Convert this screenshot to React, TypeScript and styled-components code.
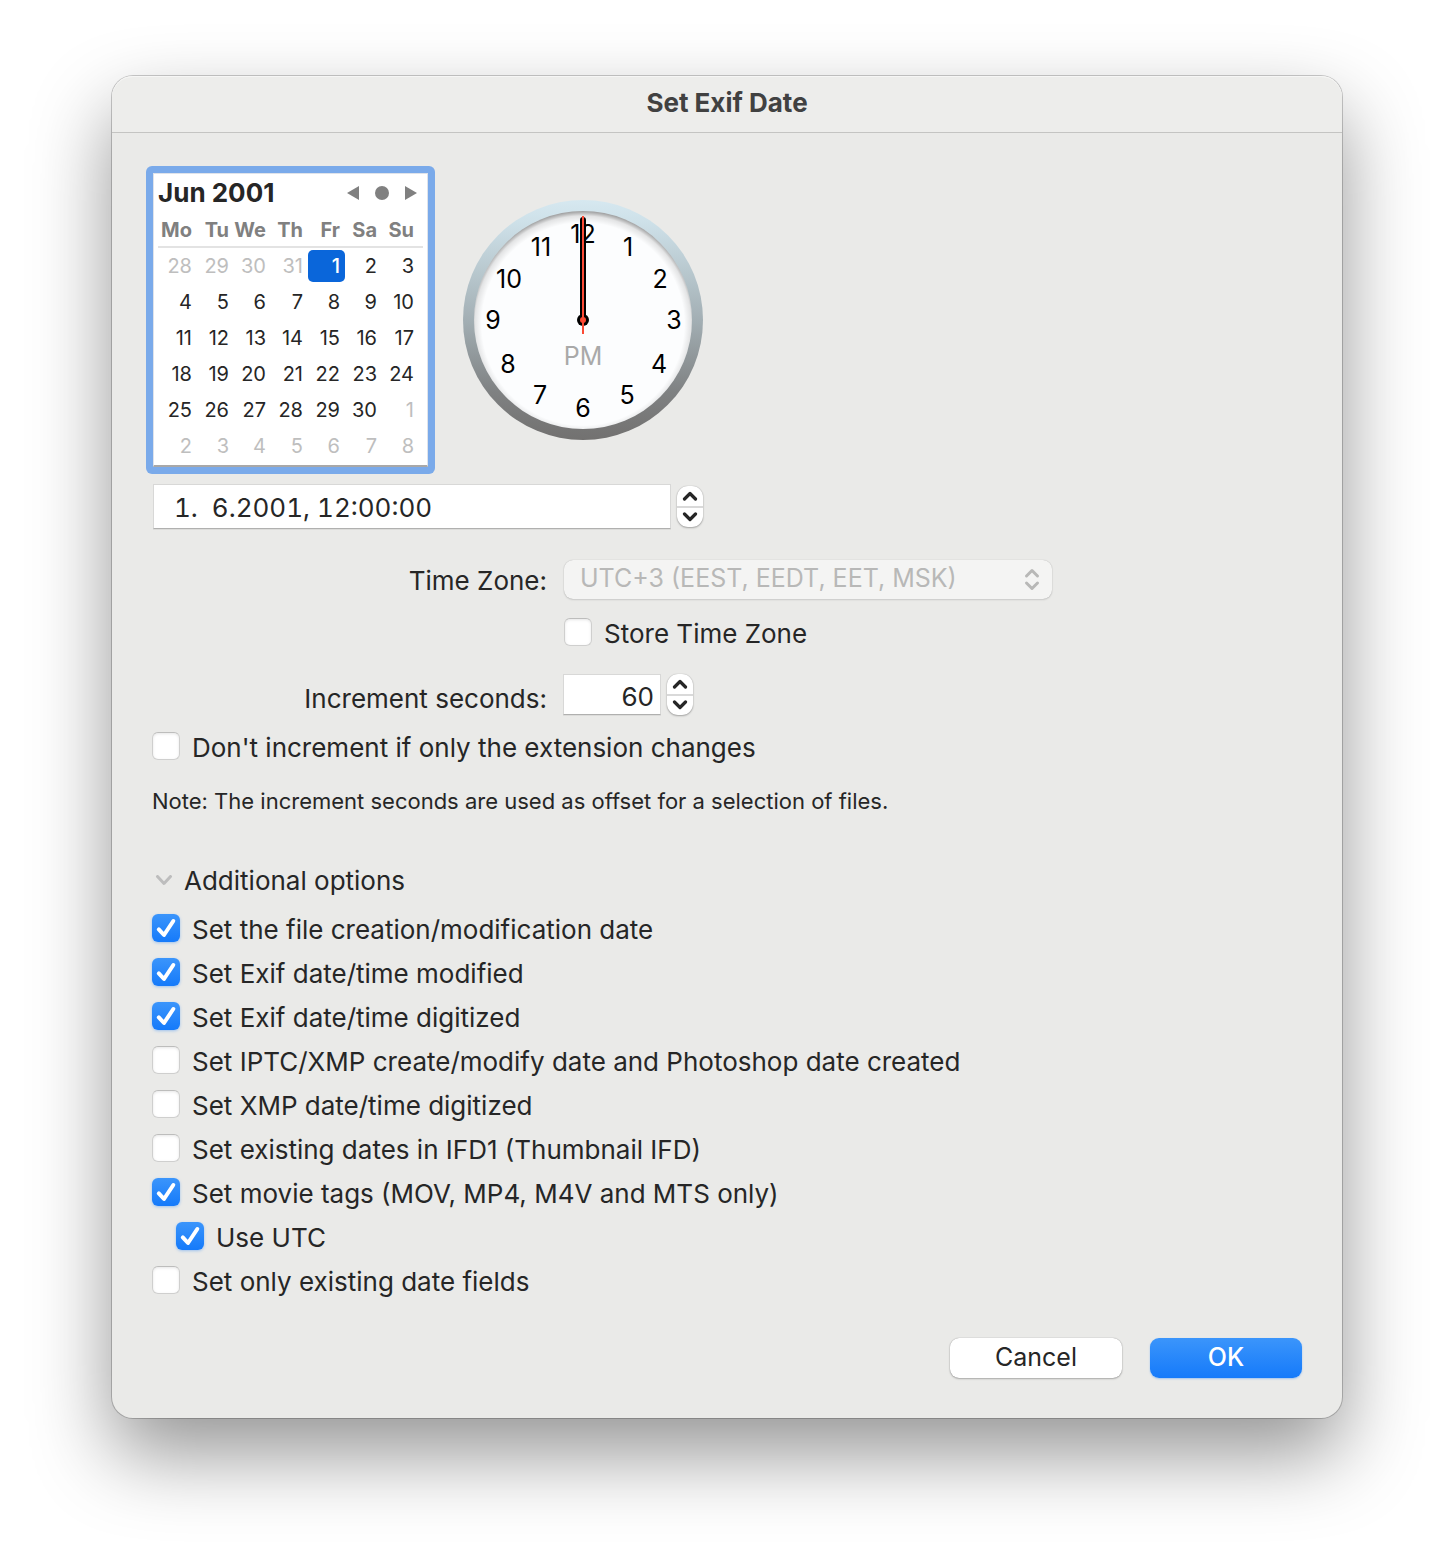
import React, { useState } from 'react';
import styled, { createGlobalStyle, css } from 'styled-components';

const ink = '#262626';

const GlobalStyle = createGlobalStyle`
  *, *::before, *::after { box-sizing: border-box; }
  body { margin: 0; background: #ffffff; }
  button, input, select { font: inherit; color: inherit; margin: 0; }
`;

const Desktop = styled.main`
  padding: 76px 112px 148px;
  font-family: Inter, "Liberation Sans", sans-serif;
  font-size: 26px;
  line-height: 32px;
  color: ${ink};
`;

const Dialog = styled.section`
  background: #eaeae8;
  border-radius: 21px;
  box-shadow:
    0 0 0 1px rgba(0, 0, 0, 0.2),
    0 36px 80px rgba(0, 0, 0, 0.42);
`;

const TitleBar = styled.header`
  height: 57px;
  padding-top: 11px;
  border-bottom: 1px solid #c4c4c2;
  border-radius: 21px 21px 0 0;
  background: #ededeb;
  box-shadow: inset 0 1px 0 #f6f6f5;
  text-align: center;
`;

const Title = styled.h1`
  margin: 0;
  font-size: 26px;
  line-height: 32px;
  font-weight: 700;
  color: #414141;
`;

const Form = styled.form`
  display: flex;
  flex-direction: column;
  padding: 40px;
`;

const Pickers = styled.div`
  display: flex;
  align-items: center;
  gap: 35px;
  padding-left: 1px;
`;

const FocusRing = styled.div`
  margin: -7px;
  padding: 7px;
  border-radius: 6px;
  background: #7aaaea;
`;

const Calendar = styled.section`
  width: 275px;
  height: 294px;
  padding: 0 4px;
  background: #ffffff;
  border: 1px solid #dfe3ea;
  border-bottom: 2px solid #a8a8a8;
`;

const CalendarBar = styled.div`
  display: flex;
  align-items: center;
  justify-content: space-between;
  height: 38px;
`;

const Month = styled.h2`
  margin: 0;
  font-size: 26px;
  line-height: 32px;
  font-weight: 700;
`;

const MonthNav = styled.div`
  display: flex;
  gap: 9px;
  padding-right: 2px;
`;

const NavButton = styled.button`
  display: grid;
  place-items: center;
  width: 20px;
  height: 20px;
  padding: 0;
  border: 0;
  background: none;
  color: #808080;
`;

const Days = styled.table`
  width: 265px;
  table-layout: fixed;
  border-collapse: separate;
  border-spacing: 0;
`;

const DayName = styled.th`
  height: 36px;
  padding: 2px 5px 0 0;
  border-bottom: 2px solid #e3e3e3;
  text-align: right;
  font-size: 20px;
  line-height: 32px;
  font-weight: 700;
  color: #808080;

  &:first-child {
    width: 39px;
  }

  &:last-child {
    width: 41px;
    padding-right: 9px;
  }
`;

const DayCell = styled.td`
  height: 36px;
  padding: 0;

  &:first-child {
    padding-left: 2px;
  }

  &:last-child {
    padding-right: 4px;
  }
`;

const Day = styled.button<{ $outside: boolean; $selected: boolean }>`
  display: block;
  width: 100%;
  height: 32px;
  padding: 0 5px 0 0;
  border: 0;
  border-radius: 5px;
  background: none;
  text-align: right;
  font-size: 20px;
  line-height: 32px;
  color: ${(p) => (p.$outside ? '#bebebe' : ink)};
  ${(p) =>
    p.$selected &&
    css`
      background: #0a66da;
      color: #ffffff;
      font-weight: 500;
    `}
`;

const Clock = styled.svg`
  display: block;
  flex: none;
  font-family: Inter, "Liberation Sans", sans-serif;
  font-size: 25px;
`;

const Spin = styled.div`
  display: flex;
  align-items: center;
  gap: 6px;
`;

const field = css`
  background: #ffffff;
  border: 1px solid #d8d8d7;
  border-bottom-color: #b0b0af;
  border-radius: 0;
  box-shadow: 0 1px 0 #dcdcda;
  outline: none;
`;

const DateRow = styled(Spin)`
  margin-top: 17px;
  padding-left: 1px;
`;

const DateInput = styled.input`
  ${field}
  width: 518px;
  height: 45px;
  padding: 2px 20px 0;
  white-space: pre;
  font-variant-numeric: tabular-nums;
`;

const SecondsInput = styled.input`
  ${field}
  width: 98px;
  height: 41px;
  padding: 4px 6px 0;
  text-align: right;
`;

const StepperBox = styled.div`
  display: flex;
  flex-direction: column;
  width: 26px;
  height: 41px;
  border-radius: 11px;
  background: #ffffff;
  box-shadow: 0 0 1px rgba(0, 0, 0, 0.3), 0 1px 2px rgba(0, 0, 0, 0.28);
`;

const StepButton = styled.button`
  display: grid;
  place-items: center;
  flex: 1;
  padding: 0;
  border: 0;
  background: none;

  & + & {
    border-top: 2px solid #d9d9d9;
  }
`;

const Settings = styled.div`
  display: grid;
  grid-template-columns: 395px 1fr;
  column-gap: 16px;
  margin-top: 31px;
`;

const FieldLabel = styled.label`
  align-self: end;
  text-align: right;
  line-height: 36px;
`;

const SecondsLabel = styled(FieldLabel)`
  line-height: 32px;
`;

const SelectWrap = styled.div`
  position: relative;
  width: 488px;
  height: 39px;
  margin-left: 1px;
  color: #b8b8b7;
`;

const Select = styled.select`
  appearance: none;
  display: block;
  width: 100%;
  height: 39px;
  padding: 0 40px 3px 16px;
  border: 0;
  border-radius: 9px;
  background: #f4f4f3;
  box-shadow: 0 0 1px rgba(0, 0, 0, 0.25), 0 1px 2px rgba(0, 0, 0, 0.12);
  color: #b8b8b7;
  font-size: 25px;
  opacity: 1;
`;

const SelectArrows = styled.svg`
  position: absolute;
  top: 8px;
  right: 12px;
  pointer-events: none;
`;

const CheckLabel = styled.label<{ $indent?: boolean }>`
  display: flex;
  align-items: flex-start;
  gap: 12px;
  padding-left: ${(p) => (p.$indent ? 24 : 0)}px;
`;

const CheckBox = styled.span`
  display: grid;
  flex: none;
  width: 28px;
  height: 28px;

  > * {
    grid-area: 1 / 1;
  }
`;

const CheckInput = styled.input`
  appearance: none;
  width: 28px;
  height: 28px;
  border-radius: 6px;
  border: 1px solid #cfcfce;
  border-top-color: #bdbdbc;
  background: #ffffff;
  box-shadow: inset 0 1px 3px rgba(0, 0, 0, 0.1);

  &:checked {
    border: 0;
    background: linear-gradient(#3b95fb, #157afa);
    box-shadow: 0 1px 3px rgba(21, 122, 250, 0.35);
  }

  & + svg {
    visibility: hidden;
    pointer-events: none;
  }

  &:checked + svg {
    visibility: visible;
  }
`;

const StoreRow = styled.div`
  grid-column: 2;
  margin: 19px 0 24px;
  padding-left: 1px;
`;

const ExtensionRow = styled.div`
  margin-top: 17px;
`;

const Note = styled.p`
  margin: 23px 0 0;
  font-size: 22px;
  line-height: 28px;
`;

const Disclosure = styled.button`
  display: flex;
  align-items: center;
  align-self: flex-start;
  gap: 11px;
  margin-top: 50px;
  padding: 0 0 0 3px;
  border: 0;
  background: none;
  line-height: 32px;
`;

const Options = styled.div`
  display: flex;
  flex-direction: column;
  gap: 12px;
  margin-top: 17px;
`;

const Actions = styled.footer`
  display: flex;
  justify-content: flex-end;
  gap: 28px;
  margin-top: 40px;
`;

const PushButton = styled.button<{ $primary?: boolean }>`
  width: ${(p) => (p.$primary ? 152 : 172)}px;
  height: 40px;
  padding: 0 0 2px;
  border: 0;
  border-radius: 9px;
  background: #ffffff;
  box-shadow: 0 0 1px rgba(0, 0, 0, 0.4), 0 1px 2px rgba(0, 0, 0, 0.25);
  font-size: 25px;
  ${(p) =>
    p.$primary &&
    css`
      background: linear-gradient(#3b95fb, #157afa);
      box-shadow: 0 1px 2px rgba(21, 122, 250, 0.35);
      color: #ffffff;
      font-weight: 500;
    `}
`;

const dayNames = ['Mo', 'Tu', 'We', 'Th', 'Fr', 'Sa', 'Su'];

const weeks = Array.from({ length: 6 }, (_, week) =>
  Array.from({ length: 7 }, (_, day) => {
    const date = new Date(2001, 4, 28 + week * 7 + day);
    return { day: date.getDate(), outside: date.getMonth() !== 5 };
  }),
);

const hours: [string, number, number][] = [
  ['12', 120, 43],
  ['1', 165, 56],
  ['2', 197, 88],
  ['3', 211, 129],
  ['4', 196, 173],
  ['5', 164, 204],
  ['6', 120, 217],
  ['7', 77, 204],
  ['8', 45, 173],
  ['9', 30, 129],
  ['10', 46, 88],
  ['11', 78, 56],
];

function AnalogClock() {
  return (
    <Clock width="240" height="240" viewBox="0 0 240 240" role="img" aria-label="12:00:00 PM">
      <defs>
        <linearGradient id="rim" x1="0" y1="0" x2="0" y2="1">
          <stop offset="0" stopColor="#d6e8f0" />
          <stop offset="0.1" stopColor="#cde0e8" />
          <stop offset="0.5" stopColor="#a3afb4" />
          <stop offset="0.8" stopColor="#7f8182" />
          <stop offset="1" stopColor="#727170" />
        </linearGradient>
        <radialGradient id="shade" gradientUnits="userSpaceOnUse" cx="120" cy="124" r="115">
          <stop offset="0.88" stopColor="#000" stopOpacity="0" />
          <stop offset="0.94" stopColor="#000" stopOpacity="0.1" />
          <stop offset="1" stopColor="#000" stopOpacity="0.5" />
        </radialGradient>
      </defs>
      <circle cx="120" cy="120" r="120" fill="url(#rim)" />
      <circle cx="120" cy="120" r="109" fill="#fcfdfe" />
      <circle cx="120" cy="120" r="109" fill="url(#shade)" />
      {hours.map(([label, x, y]) => (
        <text key={label} x={x} y={y} textAnchor="middle" fill="#000000">
          {label}
        </text>
      ))}
      <text x="120" y="165" textAnchor="middle" fill="#a9a9a9">
        PM
      </text>
      <rect x="117" y="17" width="6" height="104" rx="3" fill="#000000" />
      <circle cx="120" cy="120" r="6" fill="#000000" />
      <path d="M120 16V134" stroke="#fb4a35" strokeWidth="2" />
      <circle cx="120" cy="120" r="3" fill="#fb4a35" />
    </Clock>
  );
}

function Stepper({ name, onStep }: { name: string; onStep?: (delta: number) => void }) {
  return (
    <StepperBox>
      <StepButton type="button" aria-label={`Increase ${name}`} onClick={() => onStep?.(1)}>
        <svg width="16" height="10" viewBox="0 0 16 10" fill="none" stroke={ink} strokeWidth="3.2" strokeLinecap="round" strokeLinejoin="round">
          <path d="M2.5 8 8 2.5 13.5 8" />
        </svg>
      </StepButton>
      <StepButton type="button" aria-label={`Decrease ${name}`} onClick={() => onStep?.(-1)}>
        <svg width="16" height="10" viewBox="0 0 16 10" fill="none" stroke={ink} strokeWidth="3.2" strokeLinecap="round" strokeLinejoin="round">
          <path d="M2.5 2 8 7.5 13.5 2" />
        </svg>
      </StepButton>
    </StepperBox>
  );
}

function Check({ label, checked, indent }: { label: string; checked?: boolean; indent?: boolean }) {
  return (
    <CheckLabel $indent={indent}>
      <CheckBox>
        <CheckInput type="checkbox" defaultChecked={checked} />
        <svg width="28" height="28" viewBox="0 0 28 28" fill="none" stroke="#ffffff" strokeWidth="4" strokeLinecap="round" strokeLinejoin="round">
          <path d="M6.8 15.4 12 21 21.3 7" />
        </svg>
      </CheckBox>
      {label}
    </CheckLabel>
  );
}

const options = [
  { label: 'Set the file creation/modification date', checked: true },
  { label: 'Set Exif date/time modified', checked: true },
  { label: 'Set Exif date/time digitized', checked: true },
  { label: 'Set IPTC/XMP create/modify date and Photoshop date created' },
  { label: 'Set XMP date/time digitized' },
  { label: 'Set existing dates in IFD1 (Thumbnail IFD)' },
  { label: 'Set movie tags (MOV, MP4, M4V and MTS only)', checked: true },
  { label: 'Use UTC', checked: true, indent: true },
  { label: 'Set only existing date fields' },
];

export default function App() {
  const [selected, setSelected] = useState(4);
  const [seconds, setSeconds] = useState('60');
  const [open, setOpen] = useState(true);

  return (
    <>
      <GlobalStyle />
      <Desktop>
        <Dialog role="dialog" aria-labelledby="dialog-title">
          <TitleBar>
            <Title id="dialog-title">Set Exif Date</Title>
          </TitleBar>
          <Form onSubmit={(e) => e.preventDefault()}>
            <Pickers>
              <FocusRing>
                <Calendar>
                  <CalendarBar>
                    <Month>Jun 2001</Month>
                    <MonthNav>
                      <NavButton type="button" aria-label="Previous month">
                        <svg width="12" height="14" viewBox="0 0 12 14" fill="currentColor">
                          <path d="M0 7 12 0V14Z" />
                        </svg>
                      </NavButton>
                      <NavButton type="button" aria-label="Today">
                        <svg width="14" height="14" viewBox="0 0 14 14" fill="currentColor">
                          <circle cx="7" cy="7" r="7" />
                        </svg>
                      </NavButton>
                      <NavButton type="button" aria-label="Next month">
                        <svg width="12" height="14" viewBox="0 0 12 14" fill="currentColor">
                          <path d="M12 7 0 0V14Z" />
                        </svg>
                      </NavButton>
                    </MonthNav>
                  </CalendarBar>
                  <Days>
                    <thead>
                      <tr>
                        {dayNames.map((name) => (
                          <DayName key={name} scope="col">
                            {name}
                          </DayName>
                        ))}
                      </tr>
                    </thead>
                    <tbody>
                      {weeks.map((week, w) => (
                        <tr key={w}>
                          {week.map(({ day, outside }, d) => (
                            <DayCell key={d}>
                              <Day
                                type="button"
                                $outside={outside}
                                $selected={selected === w * 7 + d}
                                onClick={() => setSelected(w * 7 + d)}
                              >
                                {day}
                              </Day>
                            </DayCell>
                          ))}
                        </tr>
                      ))}
                    </tbody>
                  </Days>
                </Calendar>
              </FocusRing>
              <AnalogClock />
            </Pickers>

            <DateRow>
              <DateInput type="text" aria-label="Date and time" defaultValue="1.  6.2001, 12:00:00" />
              <Stepper name="date" />
            </DateRow>

            <Settings>
              <FieldLabel htmlFor="time-zone">Time Zone:</FieldLabel>
              <SelectWrap>
                <Select id="time-zone" disabled>
                  <option>UTC+3 (EEST, EEDT, EET, MSK)</option>
                </Select>
                <SelectArrows width="16" height="23" viewBox="0 0 16 23" fill="none" stroke="currentColor" strokeWidth="3" strokeLinecap="round" strokeLinejoin="round">
                  <path d="M2.5 8 8 2.5 13.5 8M2.5 15 8 20.5 13.5 15" />
                </SelectArrows>
              </SelectWrap>
              <StoreRow>
                <Check label="Store Time Zone" />
              </StoreRow>
              <SecondsLabel htmlFor="seconds">Increment seconds:</SecondsLabel>
              <Spin>
                <SecondsInput id="seconds" type="text" inputMode="numeric" value={seconds} onChange={(e) => setSeconds(e.target.value)} />
                <Stepper name="seconds" onStep={(delta) => setSeconds(String(Number(seconds) + delta))} />
              </Spin>
            </Settings>

            <ExtensionRow>
              <Check label="Don't increment if only the extension changes" />
            </ExtensionRow>
            <Note>Note: The increment seconds are used as offset for a selection of files.</Note>

            <Disclosure type="button" aria-expanded={open} onClick={() => setOpen(!open)}>
              <svg width="18" height="12" viewBox="0 0 18 12" fill="none" stroke="#bdbdbd" strokeWidth="3" strokeLinecap="round" strokeLinejoin="round">
                <path d="M2.5 1.5 9 8.5 15.5 1.5" />
              </svg>
              Additional options
            </Disclosure>
            {open && (
              <Options>
                {options.map((option) => (
                  <Check key={option.label} {...option} />
                ))}
              </Options>
            )}

            <Actions>
              <PushButton type="button">Cancel</PushButton>
              <PushButton type="submit" $primary>
                OK
              </PushButton>
            </Actions>
          </Form>
        </Dialog>
      </Desktop>
    </>
  );
}
